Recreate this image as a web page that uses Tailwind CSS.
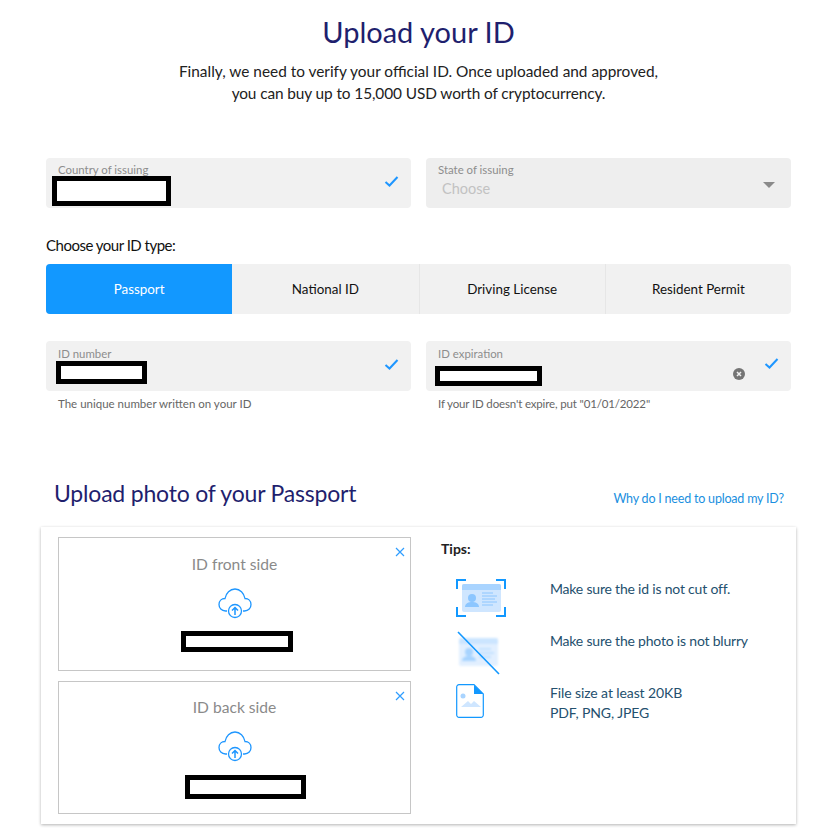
<!DOCTYPE html>
<html lang="en">
<head>
    <meta charset="UTF-8">
    <meta name="viewport" content="width=device-width, initial-scale=1.0">
    <title>Upload your ID</title>
    <script src="https://cdn.jsdelivr.net/npm/@tailwindcss/browser@4"></script>
</head>
<body class="bg-white font-['Lato','Noto_Sans',sans-serif] overflow-hidden h-[837px]">
    <div class="w-[745px] ml-[46px]">
        <!-- ------------------------heading ------------------------------- -->
        <h1 class="text-[29px] leading-[36px] text-[#1f1f6e] text-center pt-[14px]">Upload your ID</h1>
        <p class="text-[15.4px] leading-[22px] text-[#222] text-center mt-[10px]">Finally, we need to verify your official ID. Once uploaded and approved,<br><span class="tracking-[-0.1px]">you can buy up to 15,000 USD worth of cryptocurrency.</span></p>

        <!-- ------------------------country / state ------------------------------- -->
        <div class="grid grid-cols-2 gap-[15px] mt-[54px]">
            <div class="relative h-[50px] bg-[#f1f1f1] rounded-[4px] px-3 pt-[5px]">
                <label class="block text-[11.4px] leading-[14px] text-[#8d8d8d]">Country of issuing</label>
                <div class="absolute left-[6px] top-[18px] w-[119px] h-[30px] bg-white border-[5px] border-black"></div>
                <svg class="absolute right-[12px] top-[17px] w-[15px] h-[13px]" viewBox="0 0 15 13" fill="none" stroke="#1e96ff" stroke-width="2"><path d="M1.5 7l4 3.5L13.5 2"/></svg>
            </div>
            <div class="relative h-[50px] bg-[#eeeeee] rounded-[4px] px-3 pt-[5px]">
                <label class="block text-[11.4px] leading-[14px] text-[#8d8d8d]">State of issuing</label>
                <div class="text-[14.5px] leading-[22px] text-[#c2c2c2] pl-1 mt-[1px]">Choose</div>
                <svg class="absolute right-[16px] top-[24px] w-[12px] h-[6px]" viewBox="0 0 12 6" fill="#8a8a8a"><path d="M0 0h12L6 6z"/></svg>
            </div>
        </div>

        <!-- ------------------------id type ------------------------------- -->
        <p class="text-[15px] tracking-[-0.5px] leading-[20px] text-[#111] mt-[27px]">Choose your ID type:</p>
        <div class="grid grid-cols-4 h-[50px] mt-[9px] rounded-[4px] bg-[#f1f1f1] overflow-hidden text-[13.4px] text-[#111]">
            <div class="flex items-center justify-center bg-[#1298ff] text-white">Passport</div>
            <div class="flex items-center justify-center">National ID</div>
            <div class="flex items-center justify-center border-l border-[#e6e6e6]">Driving License</div>
            <div class="flex items-center justify-center border-l border-[#e6e6e6]">Resident Permit</div>
        </div>

        <!-- ------------------------id fields ------------------------------- -->
        <div class="grid grid-cols-2 gap-[15px] mt-[27px]">
            <div>
                <div class="relative h-[50px] bg-[#f1f1f1] rounded-[4px] px-3 pt-[6px]">
                    <label class="block text-[11.4px] leading-[14px] text-[#8d8d8d]">ID number</label>
                    <div class="absolute left-[10px] top-[20px] w-[91px] h-[23px] bg-white border-[5px] border-black"></div>
                    <svg class="absolute right-[12px] top-[17px] w-[15px] h-[13px]" viewBox="0 0 15 13" fill="none" stroke="#1e96ff" stroke-width="2"><path d="M1.5 7l4 3.5L13.5 2"/></svg>
                </div>
                <p class="text-[11.5px] leading-[14px] text-[#666] pl-3 mt-[6px]">The unique number written on your ID</p>
            </div>
            <div>
                <div class="relative h-[50px] bg-[#f1f1f1] rounded-[4px] px-3 pt-[6px]">
                    <label class="block text-[11.4px] leading-[14px] text-[#8d8d8d]">ID expiration</label>
                    <div class="absolute left-[9px] top-[25px] w-[107px] h-[20px] bg-white border-[5px] border-black"></div>
                    <svg class="absolute right-[46px] top-[27px] w-[12px] h-[12px]" viewBox="0 0 12 12"><circle cx="6" cy="6" r="6" fill="#757575"/><path d="M4 4l4 4M8 4l-4 4" stroke="#f1f1f1" stroke-width="1.5"/></svg>
                    <svg class="absolute right-[12px] top-[16px] w-[15px] h-[13px]" viewBox="0 0 15 13" fill="none" stroke="#1e96ff" stroke-width="2"><path d="M1.5 7l4 3.5L13.5 2"/></svg>
                </div>
                <p class="text-[11.5px] tracking-[-0.15px] leading-[14px] text-[#666] pl-3 mt-[6px]">If your ID doesn't expire, put "01/01/2022"</p>
            </div>
        </div>

        <!-- ------------------------upload header ------------------------------- -->
        <div class="flex items-center justify-between mt-[67px] pl-2 pr-[7px]">
            <h2 class="text-[23px] tracking-[-0.2px] leading-[30px] text-[#1f1f6e]">Upload photo of your Passport</h2>
            <a class="text-[12.5px] tracking-[-0.2px] text-[#1a8fe0] mt-[12px]">Why do I need to upload my ID?</a>
        </div>
    </div>

    <!-- ------------------------upload card ------------------------------- -->
    <div class="w-[755px] h-[297px] ml-[41px] mt-[18px] bg-white shadow-[0_1px_3px_rgba(0,0,0,0.3)] pl-[17px] pt-[10px] flex">
        <div class="w-[353px] flex flex-col gap-[10px]">
            <div class="relative h-[134px] border border-[#c6c6c6] flex flex-col items-center">
                <svg class="absolute right-[5px] top-[9px] w-[10px] h-[10px]" viewBox="0 0 10 10" fill="none" stroke="#2f9dff" stroke-width="1.2"><path d="M1 1l8 8M9 1l-8 8"/></svg>
                <div class="text-[15.6px] leading-[20px] text-[#8a8a8a] mt-[16px]">ID front side</div>
                <svg class="w-[34px] h-[32px] mt-[13px]" viewBox="0 0 34 32" fill="none" stroke="#1e96ff" stroke-width="1.3"><path d="M9 24H7.5C3.5 24 1 21 1 17.5 1 14 3.5 11.5 7 11.5 8 6 12 2 17 2s9 4 10 9.5c3.5 0 6 2.5 6 6 0 3.5-2.5 6.5-6.5 6.5H25"/><circle cx="17" cy="24" r="6.5" fill="#fff"/><path d="M17 28v-7M14 23.5l3-3 3 3" stroke-width="1.5"/></svg>
                <div class="w-[112px] h-[21px] bg-white border-[5px] border-black mt-[12px] ml-[5px]"></div>
            </div>
            <div class="relative h-[133px] border border-[#c6c6c6] flex flex-col items-center">
                <svg class="absolute right-[5px] top-[9px] w-[10px] h-[10px]" viewBox="0 0 10 10" fill="none" stroke="#2f9dff" stroke-width="1.2"><path d="M1 1l8 8M9 1l-8 8"/></svg>
                <div class="text-[15.6px] leading-[20px] text-[#8a8a8a] mt-[15px]">ID back side</div>
                <svg class="w-[34px] h-[32px] mt-[13px]" viewBox="0 0 34 32" fill="none" stroke="#1e96ff" stroke-width="1.3"><path d="M9 24H7.5C3.5 24 1 21 1 17.5 1 14 3.5 11.5 7 11.5 8 6 12 2 17 2s9 4 10 9.5c3.5 0 6 2.5 6 6 0 3.5-2.5 6.5-6.5 6.5H25"/><circle cx="17" cy="24" r="6.5" fill="#fff"/><path d="M17 28v-7M14 23.5l3-3 3 3" stroke-width="1.5"/></svg>
                <div class="w-[121px] h-[24px] bg-white border-[5px] border-black mt-[13px] ml-[22px]"></div>
            </div>
        </div>

        <div class="ml-[30px] flex-1">
            <p class="text-[14px] leading-[18px] font-bold text-[#222] mt-[3px]">Tips:</p>
            <div class="flex items-start h-[51px] mt-[21px] pl-[15px]">
                <svg class="w-[50px] h-[38px] shrink-0" viewBox="0 0 50 38" fill="none">
                    <path d="M1 10V1h9M40 1h9v9M1 28v9h9M40 37h9v-9" stroke="#1298ff" stroke-width="2"/>
                    <rect x="6" y="5" width="39" height="28" rx="2" fill="#cfe6ff"/>
                    <path d="M6 11V7a2 2 0 012-2h35a2 2 0 012 2v4z" fill="#a9d4ff"/>
                    <circle cx="16" cy="19" r="4" fill="#8cc6ff"/>
                    <path d="M9 28c0-4 4-5 7-5s7 1 7 5z" fill="#8cc6ff"/>
                    <path d="M26 14h11M26 17h15M26 20h13M26 23h15M26 26h11" stroke="#8cc6ff"/>
                </svg>
                <p class="text-[14px] tracking-[-0.2px] leading-[20px] text-[#24506e] ml-[44px]">Make sure the id is not cut off.</p>
            </div>
            <div class="flex items-start h-[54px] pl-[15px]">
                <svg class="w-[50px] h-[44px] shrink-0 mt-[1px]" viewBox="0 0 50 44" fill="none">
                    <g opacity="0.6" class="blur-[0.8px]">
                        <rect x="3" y="7" width="39" height="28" rx="2" fill="#cfe6ff"/>
                        <path d="M3 13V9a2 2 0 012-2h35a2 2 0 012 2v4z" fill="#a9d4ff"/>
                        <circle cx="13" cy="21" r="4" fill="#6db7ff"/>
                        <path d="M6 30c0-4 4-5 7-5s7 1 7 5z" fill="#6db7ff"/>
                        <path d="M23 18h12M23 22h15M23 26h12" stroke="#8cc6ff" stroke-width="1.5"/>
                    </g>
                    <path d="M2 1l41 42" stroke="#1298ff" stroke-width="1.6"/>
                </svg>
                <p class="text-[14px] tracking-[-0.2px] leading-[20px] text-[#24506e] ml-[44px] mt-[1px]">Make sure the photo is not blurry</p>
            </div>
            <div class="flex items-start pl-[15px]">
                <div class="w-[50px] shrink-0">
                    <svg class="w-[28px] h-[34px]" viewBox="0 0 28 34" fill="none">
                        <path d="M3 .7h15L27.3 10v21a2.3 2.3 0 01-2.3 2.3H3A2.3 2.3 0 01.7 31V3A2.3 2.3 0 013 .7z" stroke="#1298ff" stroke-width="1.2"/>
                        <path d="M18 .7L27.3 10H18z" fill="#1298ff"/>
                        <circle cx="7" cy="12" r="2.5" fill="#a9d4ff"/>
                        <path d="M5 23l7-6 3 3 3-3 7 6z" fill="#cfe6ff"/>
                    </svg>
                </div>
                <p class="text-[14px] tracking-[-0.1px] leading-[20px] text-[#24506e] ml-[44px] mt-[-1px]">File size at least 20KB<br>PDF, PNG, JPEG</p>
            </div>
        </div>
    </div>
</body>
</html>
